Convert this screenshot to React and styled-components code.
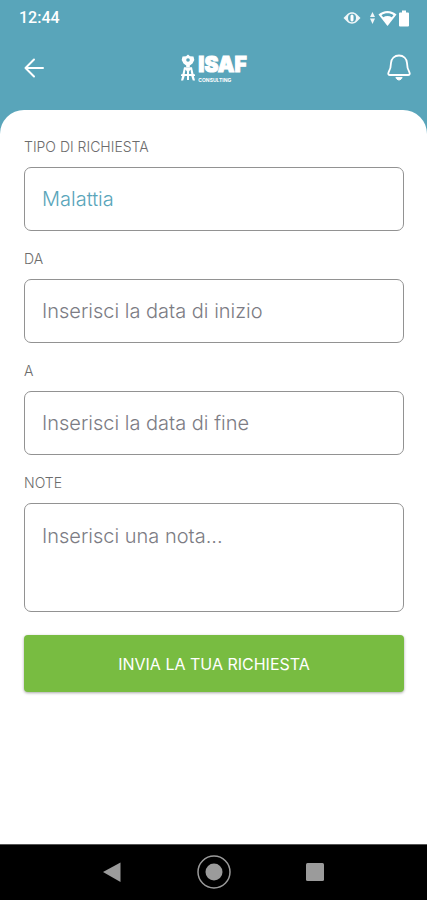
import React from 'react';
import styled, { createGlobalStyle, css } from 'styled-components';

const teal = '#59a5ba';

const GlobalStyle = createGlobalStyle`
  * { box-sizing: border-box; }
  body {
    margin: 0;
    background: #fff;
    font-family: Inter, "Liberation Sans", sans-serif;
  }
`;

const Screen = styled.div`
  display: flex;
  flex-direction: column;
  min-height: 100vh;
  background: ${teal};
`;

const StatusBar = styled.div`
  display: flex;
  align-items: center;
  justify-content: space-between;
  height: 36px;
  padding: 0 16px 0 19px;
  color: #fff;
  font: 500 16px/20px Roboto, sans-serif;
`;

const StatusIcons = styled.div`
  display: flex;
  align-items: center;
`;

const Header = styled.header`
  display: grid;
  grid-template-columns: 1fr auto 1fr;
  align-items: center;
  height: 64px;
  padding: 0 16px 0 20px;
  margin-bottom: 10px;
`;

const IconButton = styled.button`
  display: flex;
  justify-self: ${({ $end }) => ($end ? 'end' : 'start')};
  padding: 0;
  border: 0;
  background: none;
  color: #fff;
  cursor: pointer;
`;

const Brand = styled.div`
  display: flex;
  align-items: center;
  padding-right: 4px;
  color: #fff;
`;

const BrandText = styled.div`
  display: flex;
  flex-direction: column;
  margin-left: 2px;
`;

const BrandName = styled.span`
  font: 900 21px/24px Inter, sans-serif;
  -webkit-text-stroke: 1px #fff;
`;

const BrandTag = styled.span`
  font: 700 5px/6px Inter, sans-serif;
`;

const Sheet = styled.main`
  flex: 1;
  padding: 28px 23px 24px 24px;
  border-radius: 24px 24px 0 0;
  background: #fff;
`;

const Form = styled.form`
  display: flex;
  flex-direction: column;
  gap: 19px;
`;

const Field = styled.div`
  display: flex;
  flex-direction: column;
  gap: 11px;
`;

const Label = styled.label`
  color: #6c6c6c;
  font-size: 14px;
  font-weight: 300;
  line-height: 18px;
`;

const control = css`
  display: block;
  width: 100%;
  margin: 0;
  padding: 0 17px;
  border: 1px solid #929292;
  border-radius: 7px;
  background: #fff;
  color: ${teal};
  font: 300 20px/24px Inter, "Liberation Sans", sans-serif;
  outline-color: ${teal};

  &::placeholder {
    color: #7c7c84;
    opacity: 1;
  }
`;

const Select = styled.select`
  ${control}
  height: 64px;
  appearance: none;
`;

const Input = styled.input`
  ${control}
  height: 64px;
`;

const TextArea = styled.textarea`
  ${control}
  height: 109px;
  padding-top: 20px;
  resize: none;
`;

const SubmitButton = styled.button`
  height: 57px;
  margin-top: 4px;
  border: 0;
  border-radius: 4px;
  background: #78bc41;
  box-shadow: 0 1px 3px rgba(0, 0, 0, 0.35);
  color: #fff;
  font: 400 16px/20px Inter, "Liberation Sans", sans-serif;
  cursor: pointer;
`;

const NavBar = styled.nav`
  display: flex;
  align-items: center;
  justify-content: center;
  gap: 67px;
  height: 56px;
  padding-bottom: 2px;
  border-top: 1px solid #555;
  background: #000;
`;

const NavButton = styled(IconButton)`
  justify-self: auto;
  color: #9b9b9b;
`;

function EyeIcon() {
  return (
    <svg width="18" height="14" viewBox="0 0 18 14" aria-hidden="true">
      <path d="M.5 7 4.500 3C7 .8 11 .8 13.500 3L17.500 7 13.500 11C11 13.200 7 13.200 4.500 11Z" fill="#fff" fillOpacity=".9" />
      <ellipse cx="9" cy="7" rx="4" ry="4.200" fill={teal} />
      <rect x="7.500" y="3.500" width="3" height="7" rx="1.500" fill="#fff" />
    </svg>
  );
}

function DataIcon() {
  return (
    <svg width="17" height="14" viewBox="0 0 17 14" aria-hidden="true">
      <path d="M11.500 1 14 6H9Z M9 7.500h5L11.500 13Z" fill="#fff" fillOpacity=".9" />
    </svg>
  );
}

function WifiIcon() {
  return (
    <svg width="19" height="17" viewBox="0 0 19 17" aria-hidden="true">
      <path d="M.5 4.500C5.500-.3 13.500-.3 18.500 4.500L9.500 16Z" fill="#fff" />
      <path d="M3.500 5.200C7 2.600 12 2.600 15.500 5.200L13.800 7.300C11 5.500 8 5.500 5.200 7.300Z" fill={teal} />
    </svg>
  );
}

function BatteryIcon() {
  return (
    <svg width="14" height="17" viewBox="0 0 14 17" aria-hidden="true">
      <path d="M5 .5h4v2h2a1 1 0 0 1 1 1V15.500a1 1 0 0 1-1 1h-8a1 1 0 0 1-1-1v-12a1 1 0 0 1 1-1H5Z" fill="#fff" />
    </svg>
  );
}

function BackIcon() {
  return (
    <svg width="28" height="28" viewBox="0 0 28 28" fill="none" stroke="#fff" strokeWidth="2" strokeLinecap="round" strokeLinejoin="round" aria-hidden="true">
      <path d="M23 14H5.500M14 5.500 5.500 14l8.500 8.500" />
    </svg>
  );
}

function BellIcon() {
  return (
    <svg width="24" height="28" viewBox="0 0 24 28" fill="none" stroke="#fff" strokeWidth="1.800" strokeLinecap="round" strokeLinejoin="round" aria-hidden="true">
      <path d="M12 1.500C7.500 1.500 4.300 4.600 4 9 4 13.500 3.200 15.500 1.600 18.300 .8 19.800 1.500 21 3 21H21C22.500 21 23.200 19.800 22.400 18.300 20.800 15.500 20 13.500 20 9 19.700 4.600 16.500 1.500 12 1.500Z" />
      <path d="M9 23.800C10 26.800 14 26.800 15 23.800Z" fill="#fff" strokeWidth="1" />
    </svg>
  );
}

function LogoMark() {
  return (
    <svg width="16" height="28" viewBox="0 0 16 28" fill="#fff" aria-hidden="true">
      <path d="M8 .5 10 2.300 13.500 2.500 14.300 6 12.500 9.500 9.800 11.500V13H6.200V11.500L3.500 9.500 1.700 6 2.500 2.500 6 2.300Z" />
      <circle cx="8" cy="6" r="1.800" fill={teal} />
      <path d="M4 13.200H12L13.500 20 15 20.500V22H13.800L15 26.500H12.800L11.300 22H9V26H7V22H4.700L3.200 26.500H1L2.200 22H1V20.500L2.500 20Z" />
      <path d="M5.500 15.500 7 17.500V20H4.700ZM10.500 15.500 9 17.500V20H11.300Z" fill={teal} />
    </svg>
  );
}

export default function App() {
  return (
    <Screen>
      <GlobalStyle />
      <StatusBar>
        <span>12:44</span>
        <StatusIcons>
          <EyeIcon />
          <DataIcon />
          <WifiIcon />
          <BatteryIcon />
        </StatusIcons>
      </StatusBar>
      <Header>
        <IconButton type="button" aria-label="Indietro"><BackIcon /></IconButton>
        <Brand>
          <LogoMark />
          <BrandText>
            <BrandName>ISAF</BrandName>
            <BrandTag>CONSULTING</BrandTag>
          </BrandText>
        </Brand>
        <IconButton type="button" $end aria-label="Notifiche"><BellIcon /></IconButton>
      </Header>
      <Sheet>
        <Form onSubmit={(event) => event.preventDefault()}>
          <Field>
            <Label htmlFor="tipo">TIPO DI RICHIESTA</Label>
            <Select id="tipo" defaultValue="Malattia">
              <option>Malattia</option>
            </Select>
          </Field>
          <Field>
            <Label htmlFor="da">DA</Label>
            <Input id="da" type="text" placeholder="Inserisci la data di inizio" />
          </Field>
          <Field>
            <Label htmlFor="a">A</Label>
            <Input id="a" type="text" placeholder="Inserisci la data di fine" />
          </Field>
          <Field>
            <Label htmlFor="note">NOTE</Label>
            <TextArea id="note" placeholder="Inserisci una nota..." />
          </Field>
          <SubmitButton type="submit">INVIA LA TUA RICHIESTA</SubmitButton>
        </Form>
      </Sheet>
      <NavBar>
        <NavButton type="button" aria-label="Indietro">
          <svg width="34" height="34" viewBox="0 0 34 34" fill="currentColor" aria-hidden="true">
            <path d="M7 17 24.500 7.500V27Z" />
          </svg>
        </NavButton>
        <NavButton type="button" aria-label="Home">
          <svg width="34" height="34" viewBox="0 0 34 34" fill="none" stroke="currentColor" strokeWidth="1.500" aria-hidden="true">
            <circle cx="17" cy="17" r="16" />
            <circle cx="17" cy="17" r="8.500" fill="currentColor" stroke="none" />
          </svg>
        </NavButton>
        <NavButton type="button" aria-label="App recenti">
          <svg width="34" height="34" viewBox="0 0 34 34" fill="currentColor" aria-hidden="true">
            <rect x="8" y="8" width="18" height="18" rx="1.500" />
          </svg>
        </NavButton>
      </NavBar>
    </Screen>
  );
}
